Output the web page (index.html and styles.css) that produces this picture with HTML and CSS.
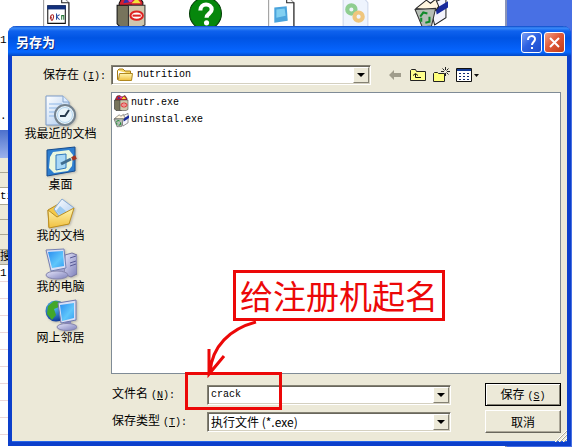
FILE: index.html
```html
<!DOCTYPE html>
<html lang="zh-CN">
<head>
<meta charset="utf-8">
<title>另存为</title>
<link rel="stylesheet" href="styles.css">
</head>
<body>
<svg width="0" height="0" class="defs" aria-hidden="true">
  <defs>
    <linearGradient id="screen" x1="0" y1="0" x2="1" y2="1"><stop offset="0" stop-color="#2b8df0"/><stop offset=".6" stop-color="#5fc6fb"/><stop offset="1" stop-color="#3aa0f2"/></linearGradient>
    <linearGradient id="paper" x1="0" y1="0" x2="1" y2="1"><stop offset="0" stop-color="#ffffff"/><stop offset="1" stop-color="#a9c9ef"/></linearGradient>
    <linearGradient id="gold" x1="0" y1="0" x2="0" y2="1"><stop offset="0" stop-color="#fff6b0"/><stop offset="1" stop-color="#f0c040"/></linearGradient>
    <linearGradient id="metal" x1="0" y1="0" x2="1" y2="1"><stop offset="0" stop-color="#e6e6fa"/><stop offset="1" stop-color="#7c7fba"/></linearGradient>
    <radialGradient id="globe" cx=".4" cy=".3" r=".7"><stop offset="0" stop-color="#58c8f8"/><stop offset="1" stop-color="#103c9c"/></radialGradient>
    <symbol id="bag" viewBox="0 0 32 32">
      <path d="M5 8 8 2l5-1 5 3 6-3 4 6v4H5z" fill="#d42032" stroke="#111"/>
      <path d="m9 8 2-5 4 4z" fill="#33a"/><path d="m17 8 5-5 4 5z" fill="#f4e43a"/><circle cx="16" cy="5" r="2" fill="#e040c0"/>
      <path d="M3 10h14v21H6l-3-3z" fill="#77745c" stroke="#111"/>
      <path d="M14 10h16v19l-4 2H14z" fill="#cfc7ad" stroke="#333"/>
      <ellipse cx="22" cy="20" rx="6" ry="4" fill="#fff" stroke="#d22" stroke-width="2"/><path d="M18 20h8" stroke="#d22" stroke-width="2"/>
    </symbol>
    <symbol id="bin" viewBox="0 0 34 32">
      <path d="M16 9 32 2v20l-11 7z" fill="#f4f4fc" stroke="#222"/>
      <path d="m22 13 12-7v6L23 19z" fill="#182a9c"/>
      <path d="m3 13 10-8 4 3 5-4 3 7-3 4z" fill="#fff6df" stroke="#222"/>
      <path d="m2 14 20-1-4 17-9 1z" fill="#b5bdb5" stroke="#333"/>
      <path d="m7 21 3-4 4 1m2 3 0 5-4 1m-4-1 0-4" fill="none" stroke="#128a2b" stroke-width="2"/>
    </symbol>
  </defs>
</svg>
<div class="desktop">
  <div class="backdrop" aria-hidden="true">
    <div class="explorer">
      <div class="files">
        <svg viewBox="0 0 32 32"><path d="M4.500 0.500H22l7 7V32H4.500z" fill="#fff" stroke="#999"/><path d="M22 .5v7h7v24" fill="none" stroke="#222"/><path d="M8.500 10.500h17v17h-17z" fill="#fff" stroke="#111"/><path d="M8 10h18v4H8z" fill="#12307c"/><path d="M11 23c0-5 4-5 3-1s-3 3-2-1" stroke="#a22" fill="none"/><path d="M17 18v6m3-5-3 2 3 3" stroke="#224a9c" fill="none"/><path d="M22 24v-4h2v4" stroke="#2a7a3a" fill="none"/></svg>
        <svg viewBox="0 0 32 32"><use href="#bag"/></svg>
        <svg viewBox="0 0 32 32"><circle cx="16" cy="18" r="15.500" fill="#06870c" stroke="#043c06"/><path d="M11 15c0-8 11-7 11-1 0 4-5 4-5 8" fill="none" stroke="#fff" stroke-width="4"/><circle cx="17" cy="27" r="2.500" fill="#fff"/></svg>
        <svg viewBox="0 0 32 32"><path d="M4.500 .5H22l7 7V32H4.500z" fill="#fff" stroke="#999"/><path d="M22 .5v7h7v24" fill="none" stroke="#222"/><path d="m10 12 12-1 1 14-13 2z" fill="#4ba4dc"/><path d="m12 14 8-1 1 7-9 2z" fill="#82d0f1"/></svg>
        <svg viewBox="0 0 32 32"><path d="M4 .5h18l6 7V32H4z" fill="#eef4fd" stroke="#ccd6ea"/><circle cx="12" cy="14" r="4" fill="none" stroke="#8fce91" stroke-width="4"/><circle cx="19" cy="21" r="4" fill="none" stroke="#efc67d" stroke-width="4"/></svg>
        <svg viewBox="0 0 34 32"><use href="#bin"/></svg>
      </div>
      <div class="strip">
        <div class="strip-doc"><span>1</span><span>.</span></div>
        <div class="strip-title"></div>
        <div class="strip-row"></div>
        <div class="strip-row"></div>
        <div class="strip-row field">ti</div>
        <div class="strip-row"></div>
        <div class="strip-row"></div>
        <div class="strip-row"></div>
        <div class="strip-row head">搜</div>
        <div class="strip-list">1</div>
      </div>
    </div>
    <div class="wallpaper"></div>
  </div>

  <main class="dialog" role="dialog" aria-labelledby="title">
    <header class="titlebar">
      <h1 id="title">另存为</h1>
      <button class="cap help" type="button" aria-label="帮助"><svg viewBox="0 0 19 19"><path d="M6 7c0-5 7-5 7-1 0 3-3 3-3 6" fill="none" stroke="#fff" stroke-width="2"/><path d="M9 14h2v2H9z" fill="#fff"/></svg></button>
      <button class="cap close" type="button" aria-label="关闭"><svg viewBox="0 0 19 19"><path d="m5 5 9 9m0-9-9 9" stroke="#fff" stroke-width="2"/></svg></button>
    </header>
    <form class="content">
      <div class="lookin">
        <label for="folder">保存在<span class="latin">(<u>I</u>):</span></label>
        <div class="combo">
          <svg class="folder" viewBox="0 0 18 16"><path d="M1.500 3.500 3 2h4l2 2h5.500V7M1.500 3.500v9l1 1" fill="#f6d662" stroke="#a47a14"/><path d="M3.500 6.500h13l-1 7h-12l-1-1z" fill="url(#gold)" stroke="#b08820"/></svg>
          <select id="folder"><option>nutrition</option></select>
          <span class="arrow"></span>
        </div>
        <div class="tools">
          <button type="button" aria-label="后退"><svg viewBox="0 0 16 16"><path d="m2 8 5-5v3h7v4H7v3z" fill="#a09d8c"/></svg></button>
          <button type="button" aria-label="向上一级"><svg viewBox="0 0 16 16"><path d="M.5 13.500v-10l1-1h4l1 2h9v9z" fill="#ffff8c" stroke="#222"/><path d="M5.500 7v3.500H11M3 8.500l2.500-2 2.500 2" fill="none" stroke="#111"/></svg></button>
          <button type="button" aria-label="新建文件夹"><svg viewBox="0 0 16 16"><path d="M.5 14.500v-8l1-1h3l1 1h6v8z" fill="#ffff7a" stroke="#222"/><path d="M12.500 0v3m0 3v3M8 4.500h3m3 0h3M9.500 1.500l2 2m2 2 2 2m0-6-2 2" stroke="#222"/></svg></button>
          <button class="view" type="button" aria-label="查看菜单"><svg viewBox="0 0 22 16"><path d="M.5 1.500h15v13H.5z" fill="#fff" stroke="#111"/><path d="M1 2h14v2H1z" fill="#123a94"/><path d="M3 6.500h2m2 0h2m2 0h2m-10 3h2m2 0h2m2 0h2m-10 3h2m2 0h2m2 0h2" stroke="#112c74"/><path d="M18 7h5l-2.500 3z" fill="#111"/></svg></button>
        </div>
      </div>

      <nav class="places">
        <a href="#recent"><svg viewBox="0 0 32 32"><path d="M1 1h17l6 6v23H1z" fill="url(#paper)" stroke="#7d9cc8"/><path d="M18 1v6h6" fill="#dcecff" stroke="#86a5cc"/><path d="M4 9h13M4 13h10M4 17h8M4 21h8" stroke="#8db6e6"/><circle cx="20" cy="20" r="10" fill="#e9f4fb" stroke="#74838f" stroke-width="2"/><circle cx="20" cy="20" r="7.500" fill="none" stroke="#b5d7ef"/><path d="m24 15-4 6h-5" fill="none" stroke="#273a4d" stroke-width="2"/></svg>我最近的文档</a>
        <a href="#desktop"><svg viewBox="0 0 32 32"><path d="m2 4 28-3v24L2 30z" fill="#2e7ed0" stroke="#164c8e"/><path d="m8 6 16-2 4 5-1 11-4 5-14 2-5-5 1-11z" fill="#eaf7df"/><path d="m11 9 10-1v14l-10 2z" fill="#a9d9f7" stroke="#3078bb"/><path d="m16 18 10-5" stroke="#3f6d90" stroke-width="3"/><path d="m27 13 4-2" stroke="#a33522" stroke-width="4"/></svg>桌面</a>
        <a href="#documents"><svg viewBox="0 0 32 32"><path d="M3 13 17 5l6 8v14L4 30z" fill="#f2c849" stroke="#ba8b1d"/><path d="m9 12 8-10 12 9-12 12z" fill="url(#paper)" stroke="#84a9d4"/><path d="m15 9 7 6-5 5-6-6z" fill="#9ccaf0"/><path d="m3 13 9 7 17-9-5 16-20 4z" fill="url(#gold)" stroke="#bc8f22"/></svg>我的文档</a>
        <a href="#computer"><svg viewBox="0 0 32 32"><path d="m20 7 7-2 5 2v19l-6 3-7-3z" fill="url(#metal)" stroke="#77769f"/><path d="m25 10 6-2m-6 7 6-2m-6 5 6-2" stroke="#595b96"/><path d="m11 20 8-1v6l-8 1z" fill="#a2a4ce"/><ellipse cx="12" cy="27" rx="11" ry="4" fill="url(#metal)" stroke="#8585ae"/><path d="m1 2 18-1 2 19-15 3z" fill="#d8dff6" stroke="#7581b3"/><path d="m3 4 15-1 1 15-12 2z" fill="url(#screen)"/></svg>我的电脑</a>
        <a href="#network"><svg viewBox="0 0 32 32"><circle cx="11" cy="12" r="10.500" fill="url(#globe)"/><path d="M3 7 9 2l7 1-2 5-5 2 2 6-4 5-5-6z" fill="#42a72a"/><path d="m20 22 6-1v6h-6z" fill="#8584bc"/><ellipse cx="22" cy="28" rx="10" ry="3.500" fill="url(#metal)" stroke="#8585ae"/><path d="m13 4 18-3v20l-15 3z" fill="#d8dff6" stroke="#7078ad"/><path d="m15 6 14-2v15l-12 3z" fill="url(#screen)"/></svg>网上邻居</a>
      </nav>

      <ul class="list">
        <li><svg viewBox="0 0 32 32"><use href="#bag"/></svg>nutr.exe</li>
        <li><svg viewBox="0 0 34 32"><use href="#bin"/></svg>uninstal.exe</li>
      </ul>

      <div class="fields">
        <label for="name">文件名<span class="latin">(<u>N</u>):</span></label>
        <div class="combo"><input id="name" type="text" value="crack"><span class="arrow"></span></div>
        <button class="push default" type="submit">保存<span class="latin">(<u>S</u>)</span></button>
        <label for="type">保存类型<span class="latin">(<u>T</u>):</span></label>
        <div class="combo"><select id="type" class="mixed"><option>执行文件 (*.exe)</option></select><span class="arrow"></span></div>
        <button class="push" type="button">取消</button>
      </div>
    </form>
    <svg class="grip" viewBox="0 0 12 12" aria-hidden="true"><path d="M0 12 12 0M4 12l8-8M8 12l4-4" stroke="#fff"/><path d="M1 12 12 1M5 12l7-7M9 12l3-3" stroke="#aaa797"/></svg>
  </main>

  <p class="note">给注册机起名</p>
  <svg class="pointer" viewBox="0 0 60 60" aria-hidden="true"><path d="M54 2C28 9 10 26 8 52M7 29v25L22 36" fill="none" stroke="#ec0808" stroke-width="3"/></svg>
  <div class="frame" aria-hidden="true"></div>
</div>
</body>
</html>
```
FILE: styles.css
```css
* { box-sizing: border-box; }

body {
  margin: 0;
  font: 12px/16px "Noto Sans CJK SC", sans-serif;
  color: #000;
}

.defs { position: absolute; }

.desktop {
  position: relative;
  display: flex;
  min-height: 100vh;
  padding: 26px 1px 1px 8px;
  overflow: hidden;
  background: #fff;
}

/* windows behind the dialog */
.backdrop {
  position: absolute;
  inset: 0;
  display: flex;
}

.explorer { flex: 1; }

.wallpaper {
  width: 67px;
  border-left: 2px solid #8a94b8;
  background: #4870e4;
}

.files {
  display: flex;
  height: 26px;
  padding-left: 18px;
  overflow: hidden;
}

.files svg {
  flex: none;
  width: 35px;
  height: 33px;
  margin: -5px 20px 0;
}

.strip {
  width: 24px;
  font: 11px/16px "Liberation Mono", "Noto Sans CJK SC", monospace;
}

.strip-doc {
  display: flex;
  flex-direction: column;
  justify-content: space-between;
  height: 104px;
  padding: 6px 0;
}

.strip-title {
  height: 28px;
  background: linear-gradient(#4d70cc, #9cb2ec);
}

.strip-row {
  height: 15px;
  border-bottom: 1px solid #aaa794;
  background: #ece9d8;
}

.strip-row.field { height: 17px; background: #fff; }

.strip-row.head { background: #d8d5c8; line-height: 14px; }

.strip-list {
  height: 200px;
  background: repeating-linear-gradient(#fff 0 16px, #ecd8d8 16px 17px);
}

/* dialog */
.dialog {
  position: relative;
  display: flex;
  flex: 1;
  flex-direction: column;
  border: solid #0c3fcb;
  border-width: 0 4px 4px;
  border-radius: 8px 8px 0 0;
  background: #ece9d8;
  box-shadow: inset 0 -1px #2865e8;
}

.titlebar {
  display: flex;
  align-items: center;
  gap: 2px;
  height: 30px;
  margin: 0 -4px;
  padding: 2px 6px 0 8px;
  border-radius: 8px 8px 0 0;
  background: linear-gradient(#0a48c8 0, #3c8cf8 2px, #0f62ee 5px, #0054e3 12px, #0460f8 22px, #0668ff 26px, #0348c4 30px);
}

h1 {
  flex: 1;
  margin: 0;
  color: #fff;
  font-size: 13px;
  font-weight: 700;
  line-height: 20px;
  text-shadow: 1px 1px #0b2d86;
}

.cap {
  width: 21px;
  height: 21px;
  padding: 0;
  border: 1px solid #fff;
  border-radius: 3px;
  background: linear-gradient(135deg, #7c9ff4, #2e62e2 45%, #1c4ccb);
}

.cap.close { background: linear-gradient(135deg, #f0a088, #e05a38 45%, #c03c18); }

.cap svg { display: block; }

.content {
  display: grid;
  flex: 1;
  grid-template: auto 1fr auto / 99px 1fr;
  padding: 9px 6px 9px 0;
}

.lookin {
  display: grid;
  grid-column: 1 / -1;
  grid-template-columns: 68px 260px auto;
  align-items: center;
  justify-content: start;
  margin-left: 31px;
  margin-bottom: 7px;
}

label { line-height: 14px; }

.latin, input, select, .list {
  font: 10px/16px "Liberation Mono", "Noto Sans CJK SC", monospace;
}

.latin {
  margin-left: 3px;
  line-height: 14px;
}

.combo {
  display: flex;
  height: 20px;
  border: 1px solid;
  border-color: #848173 #fff #fff #848173;
  background: #fff;
  box-shadow: inset 1px 1px #69675c, inset -1px -1px #d4d0c0;
}

.combo select,
.combo input {
  flex: 1;
  min-width: 0;
  padding: 0 3px;
  border: 0;
  outline: 0;
  background: none;
  color: #000;
  appearance: none;
}

.combo .mixed { font: 12px/16px "Noto Sans CJK SC", sans-serif; }

.folder { width: 18px; height: 16px; margin: 1px 0 0 4px; }

.arrow {
  display: flex;
  align-items: center;
  justify-content: center;
  width: 16px;
  margin: 1px;
  border: 1px solid;
  border-color: #fff #848173 #848173 #fff;
  background: #ece9d8;
  pointer-events: none;
}

.arrow::before {
  content: "";
  border: solid transparent;
  border-width: 4px 4px 0;
  border-top-color: #000;
}

.tools {
  display: flex;
  gap: 7px;
  margin-left: 16px;
}

.tools button {
  width: 16px;
  height: 16px;
  padding: 0;
  border: 0;
  background: none;
}

.tools .view { width: 22px; }

.tools svg { display: block; overflow: visible; }

.places {
  display: flex;
  flex-direction: column;
  gap: 5px;
  padding: 3px 2px 0 0;
}

.places a {
  display: flex;
  flex-direction: column;
  align-items: center;
  color: #000;
  text-decoration: none;
}

.places svg {
  width: 32px;
  height: 32px;
  margin-bottom: -2px;
  filter: drop-shadow(1px 1px 1px #8888);
}

.list {
  margin: 0;
  padding: 1px;
  border: 1px solid #7f8b96;
  background: #fff;
  list-style: none;
}

.list li {
  display: flex;
  align-items: center;
  gap: 2px;
  height: 17px;
}

.list svg { width: 16px; height: 16px; }

.fields {
  display: grid;
  grid-column: 2;
  grid-template-columns: 95px 1fr 76px;
  row-gap: 4px;
  align-items: center;
  margin-top: 9px;
  padding-left: 1px;
}

.fields .combo { margin-right: 34px; }

.push {
  height: 23px;
  padding: 0;
  border: 1px solid;
  border-color: #fff #69675c #69675c #fff;
  background: #ece9d8;
  box-shadow: inset -1px -1px #aca899;
  font: 12px/16px "Noto Sans CJK SC", sans-serif;
  color: #000;
}

.push.default {
  border-color: #000;
  box-shadow: inset 1px 1px #fff, inset -1px -1px #848173;
}

.grip {
  position: absolute;
  right: 0;
  bottom: 0;
  width: 12px;
  height: 12px;
}

/* red markup over the dialog */
.note {
  position: absolute;
  left: 233px;
  top: 270px;
  margin: 0;
  padding: 0 4px;
  border: 3px solid #ec0808;
  color: #ec0808;
  font-size: 33px;
  font-weight: 400;
  line-height: 45px;
}

.pointer {
  position: absolute;
  left: 202px;
  top: 320px;
  width: 60px;
  height: 60px;
}

.frame {
  position: absolute;
  left: 185px;
  top: 372px;
  width: 97px;
  height: 38px;
  border: 3px solid #ec0808;
}
```
